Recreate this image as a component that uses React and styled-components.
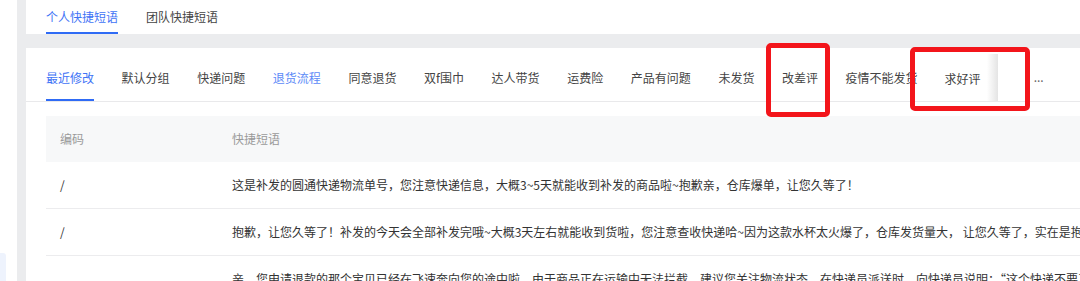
import React from "react";
import styled, { createGlobalStyle, css } from "styled-components";

const GlobalStyle = createGlobalStyle`
  html, body { margin: 0; padding: 0; background: #fff; }
  body {
    font-family: "Noto Sans CJK SC", "Noto Sans", sans-serif;
    font-size: 12px;
    color: #333;
  }
  * { box-sizing: border-box; }
`;

const Page = styled.div`
  position: relative;
  display: flex;
  width: 1080px;
  height: 281px;
  overflow: hidden;
  background: #fff;
`;

const LeftRail = styled.div`
  width: 17px;
  flex: none;
  display: flex;
  flex-direction: column;
`;

const MenuHint = styled.div`
  margin-top: auto;
  width: 6px;
  height: 28px;
  background: #eef3fd;
  border-top-right-radius: 3px;
`;

const Divider = styled.div`
  width: 9px;
  flex: none;
  background: #ebecee;
`;

const Main = styled.div`
  flex: 1;
  min-width: 0;
  display: flex;
  flex-direction: column;
  overflow: hidden;
`;

const TopTabs = styled.div`
  height: 34px;
  flex: none;
  display: flex;
  gap: 28px;
  padding-left: 20px;
`;

const activeTab = css`
  color: #3f74f6;
  border-bottom-color: #2f6bf5;
`;

const TopTab = styled.div`
  display: flex;
  align-items: center;
  height: 100%;
  border-bottom: 2px solid transparent;
  color: #444;
  white-space: nowrap;
  ${(p) => p.$active && activeTab}
`;

const Band = styled.div`
  height: 14px;
  background: #ebecee;
  flex: none;
`;

const CategoryBar = styled.div`
  height: 54px;
  flex: none;
  display: flex;
  padding-left: 20px;
  border-bottom: 1px solid #e9e9eb;
`;

const CategoryList = styled.div`
  display: flex;
  gap: 27.6px;
`;

const Category = styled.div`
  display: flex;
  align-items: center;
  height: 100%;
  padding-top: 8px;
  border-bottom: 2px solid transparent;
  white-space: nowrap;
  color: #444;
  ${(p) => p.$active && activeTab}
  ${(p) => p.$tint && css`color: #5c8af7;`}
`;

const StickyBox = styled.div`
  display: flex;
  align-items: center;
  margin-top: 6px;
  padding: 2px 17px 0 27px;
  height: 47px;
  background: linear-gradient(to right, #fff 0, #fff 86%, #e4e4e4 100%);
  white-space: nowrap;
  color: #444;
`;

const MoreButton = styled.div`
  display: flex;
  align-items: center;
  padding-top: 4px;
  margin-left: 36px;
  color: #666;
  font-size: 12px;
`;

const Table = styled.div`
  margin: 14px 0 0 20px;
  flex: none;
  display: flex;
  flex-direction: column;
`;

const Row = styled.div`
  display: flex;
  align-items: center;
  flex: none;
  min-height: ${(p) => (p.$head ? 46 : 47)}px;
  padding: ${(p) => (p.$head ? "0" : "13px 0 13px")};
  line-height: 20px;
  background: ${(p) => (p.$head ? "#f7f8f9" : "#fff")};
  border-bottom: ${(p) => (p.$head ? "none" : "1px solid #ececee")};
  color: ${(p) => (p.$head ? "#9a9a9a" : "#333")};
`;

const CodeCell = styled.div`
  width: 172px;
  flex: none;
  padding-left: 14px;
`;

const TextCell = styled.div`
  width: 930px;
  flex: none;
  padding-left: 14px;
`;

const Mark = styled.div`
  position: absolute;
  left: ${(p) => p.$x}px;
  top: ${(p) => p.$y}px;
  width: ${(p) => p.$w}px;
  height: ${(p) => p.$h}px;
  border: 5px solid #f3151b;
  border-radius: 5px;
  pointer-events: none;
`;

const categories = [
  { label: "最近修改", active: true },
  { label: "默认分组" },
  { label: "快递问题" },
  { label: "退货流程", tint: true },
  { label: "同意退货" },
  { label: "双f围巾" },
  { label: "达人带货" },
  { label: "运费险" },
  { label: "产品有问题" },
  { label: "未发货" },
  { label: "改差评" },
  { label: "疫情不能发货" },
];

const rows = [
  "这是补发的圆通快递物流单号，您注意快递信息，大概3~5天就能收到补发的商品啦~抱歉亲，仓库爆单，让您久等了！",
  "抱歉，让您久等了！补发的今天会全部补发完哦~大概3天左右就能收到货啦，您注意查收快递哈~因为这款水杯太火爆了，仓库发货量大， 让您久等了，实在是抱歉啦~",
  "亲，您申请退款的那个宝贝已经在飞速奔向您的途中啦，由于商品正在运输中无法拦截，建议您关注物流状态，在快递员派送时，向快递员说明：“这个快递不要了”，拒收后退回我们仓库，我们收到后会第一时间为您处理退款哦~",
];

export default function App() {
  return (
    <>
      <GlobalStyle />
      <Page>
        <LeftRail>
          <MenuHint />
        </LeftRail>
        <Divider />
        <Main>
          <TopTabs>
            <TopTab $active>个人快捷短语</TopTab>
            <TopTab>团队快捷短语</TopTab>
          </TopTabs>
          <Band />
          <CategoryBar>
            <CategoryList>
              {categories.map((c) => (
                <Category key={c.label} $active={c.active} $tint={c.tint}>
                  {c.label}
                </Category>
              ))}
            </CategoryList>
            <StickyBox>求好评</StickyBox>
            <MoreButton>...</MoreButton>
          </CategoryBar>
          <Table>
            <Row $head>
              <CodeCell>编码</CodeCell>
              <TextCell>快捷短语</TextCell>
            </Row>
            {rows.map((t, i) => (
              <Row key={i}>
                <CodeCell>/</CodeCell>
                <TextCell>{t}</TextCell>
              </Row>
            ))}
          </Table>
        </Main>
        <Mark $x={766} $y={43} $w={64} $h={74} />
        <Mark $x={910} $y={47} $w={120} $h={64} />
      </Page>
    </>
  );
}
